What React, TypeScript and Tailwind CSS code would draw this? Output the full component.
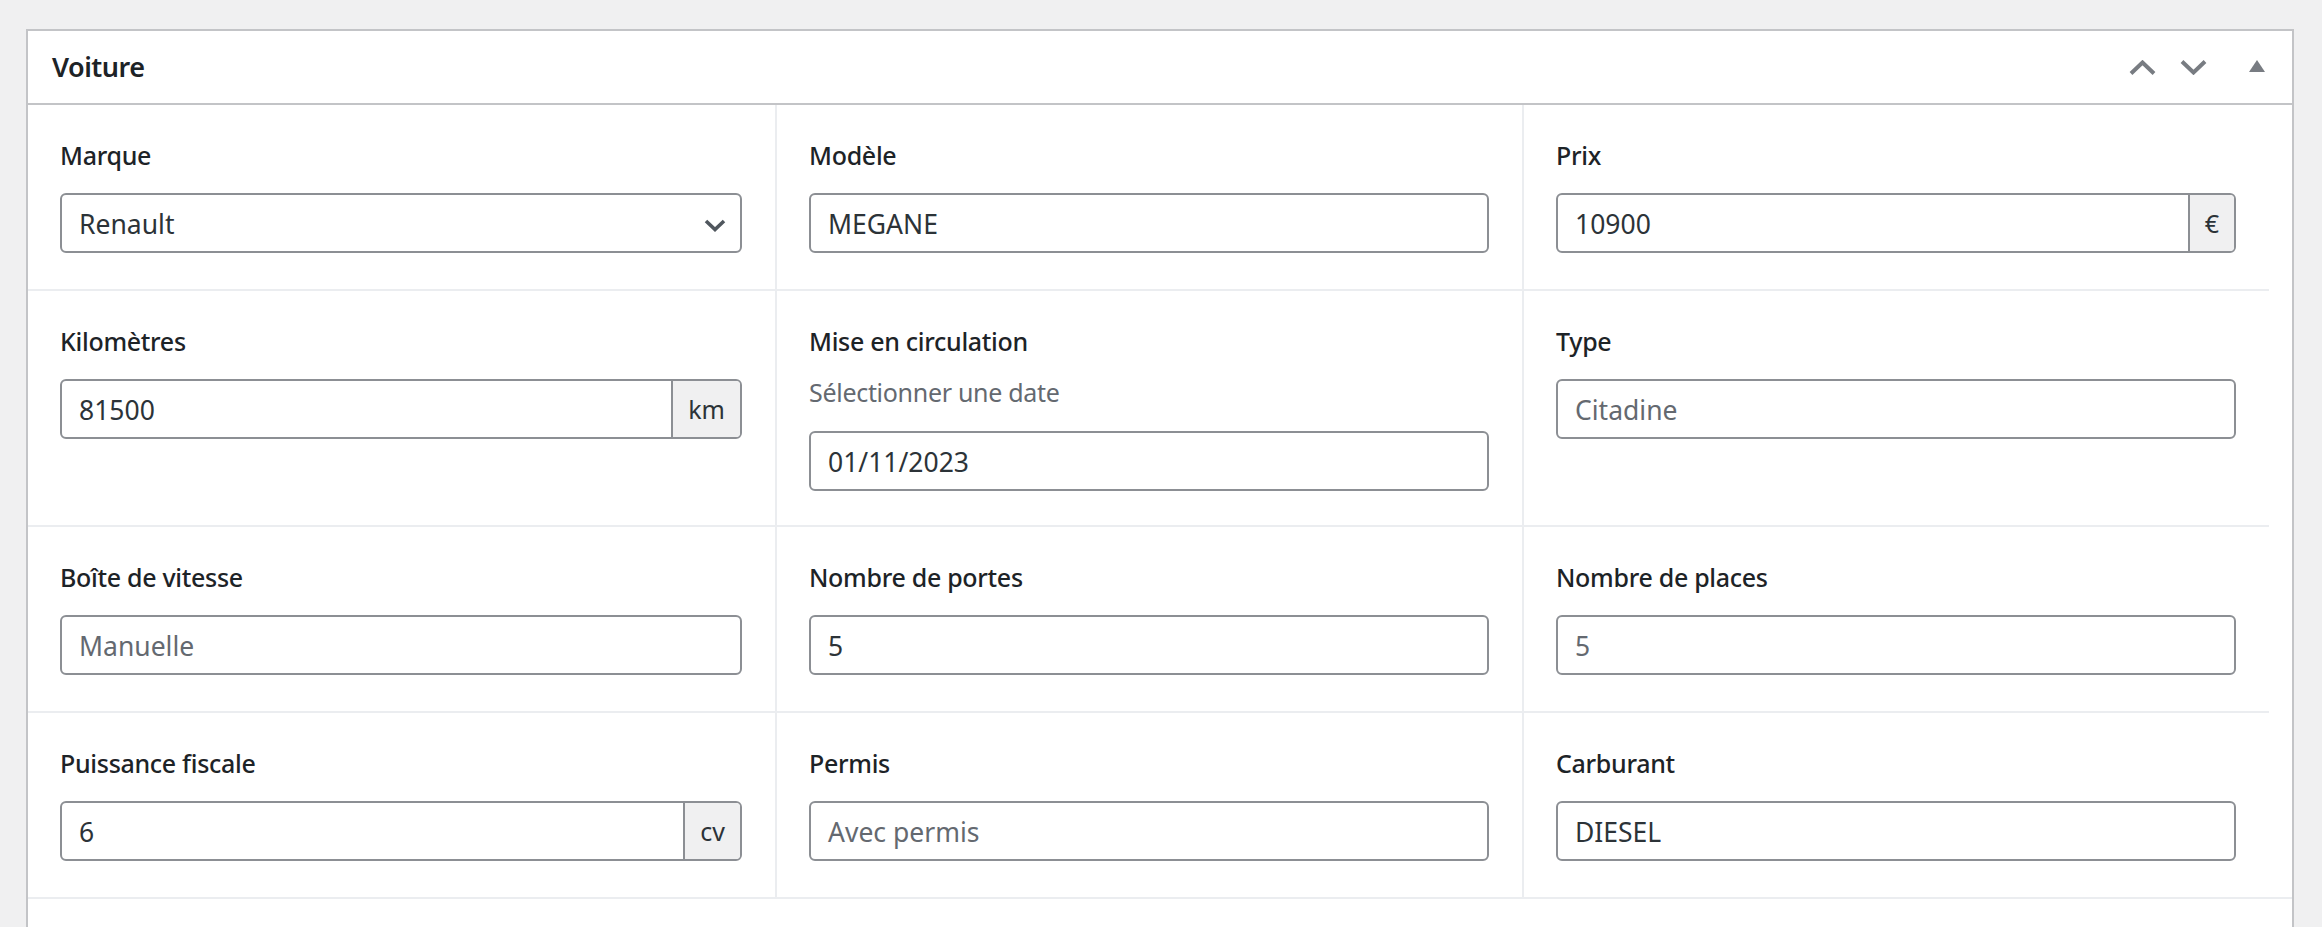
import React from "react";

const FONT = "font-['Noto_Sans','Open_Sans',sans-serif]";

function Control({
  value,
  placeholder,
  suffix,
  select,
}: {
  value?: string;
  placeholder?: string;
  suffix?: string;
  select?: boolean;
}) {
  const isPh = !value;
  return (
    <div className="flex h-[60px] w-full rounded-[6px] border-2 border-[#8c8f94] bg-white overflow-hidden">
      <div
        className={`flex flex-1 items-center pl-[17px] pr-[14px] pt-[2px] text-[26.5px] ${
          isPh ? "text-[#646970]" : "text-[#2c3338]"
        }`}
      >
        <span className="flex-1 leading-none">{value || placeholder}</span>
        {select && (
          <svg width="22" height="13" viewBox="0 0 22 13" className="mt-[2px]">
            <polyline
              points="2,2 11,10.5 20,2"
              fill="none"
              stroke="#50575e"
              strokeWidth="3.6"
            />
          </svg>
        )}
      </div>
      {suffix && (
        <div className="flex items-center justify-center border-l-2 border-[#8c8f94] bg-[#f0f0f1] px-[15px] pt-[2px] text-[25px] text-[#2c3338]">
          {suffix}
        </div>
      )}
    </div>
  );
}

function Cell({
  label,
  desc,
  first,
  top,
  children,
}: {
  label: string;
  desc?: string;
  first?: boolean;
  top?: boolean;
  children: React.ReactNode;
}) {
  return (
    <div
      className={`${first ? "" : "border-l-2 border-l-[#ebedf0]"} ${
        top ? "" : "border-t-2 border-t-[#ebedf0]"
      } pl-[32px] pr-[33px] pt-[32px] ${desc ? "pb-[34px]" : "pb-[36px]"}`}
    >
      <div className="text-[25px] leading-[36px] font-medium tracking-[-0.3px] text-[#1d2327]">
        {label}
      </div>
      {desc && (
        <div className="mt-[15px] text-[25px] leading-[36px] tracking-[-0.3px] text-[#646970]">
          {desc}
        </div>
      )}
      <div className={desc ? "mt-[21px]" : "mt-[20px]"}>{children}</div>
    </div>
  );
}

export default function App() {
  return (
    <div className={`min-h-screen w-full bg-[#f0f0f1] pl-[26px] pr-[28px] pt-[29px] ${FONT}`}>
      <div className="border-2 border-[#c3c4c7] bg-white">
        <div className="flex h-[74px] items-center justify-between border-b-2 border-[#c3c4c7] pl-[24px] pr-[27px]">
          <h2 className="text-[27px] font-semibold tracking-[-0.5px] text-[#1d2327]">Voiture</h2>
          <div className="flex items-center">
            <svg width="27" height="15" viewBox="0 0 27 15">
              <polyline points="2,13.5 13.5,2.5 25,13.5" fill="none" stroke="#787c82" strokeWidth="4" />
            </svg>
            <svg width="27" height="15" viewBox="0 0 27 15" className="ml-[24px]">
              <polyline points="2,1.5 13.5,12.5 25,1.5" fill="none" stroke="#787c82" strokeWidth="4" />
            </svg>
            <svg width="16" height="12" viewBox="0 0 16 12" className="ml-[42px] mb-[3px]">
              <polygon points="8,0 16,12 0,12" fill="#787c82" />
            </svg>
          </div>
        </div>

        <div className="grid grid-cols-[747px_747px_747px]">
          <Cell label="Marque" first top>
            <Control value="Renault" select />
          </Cell>
          <Cell label="Modèle" top>
            <Control value="MEGANE" />
          </Cell>
          <Cell label="Prix" top>
            <Control value="10900" suffix="€" />
          </Cell>

          <Cell label="Kilomètres" first>
            <Control value="81500" suffix="km" />
          </Cell>
          <Cell label="Mise en circulation" desc="Sélectionner une date">
            <Control value="01/11/2023" />
          </Cell>
          <Cell label="Type">
            <Control placeholder="Citadine" />
          </Cell>

          <Cell label="Boîte de vitesse" first>
            <Control placeholder="Manuelle" />
          </Cell>
          <Cell label="Nombre de portes">
            <Control value="5" />
          </Cell>
          <Cell label="Nombre de places">
            <Control placeholder="5" />
          </Cell>

          <Cell label="Puissance fiscale" first>
            <Control value="6" suffix="cv" />
          </Cell>
          <Cell label="Permis">
            <Control placeholder="Avec permis" />
          </Cell>
          <Cell label="Carburant">
            <Control value="DIESEL" />
          </Cell>
        </div>
        <div className="h-[80px] border-t-2 border-[#ebedf0]" />
      </div>
    </div>
  );
}
